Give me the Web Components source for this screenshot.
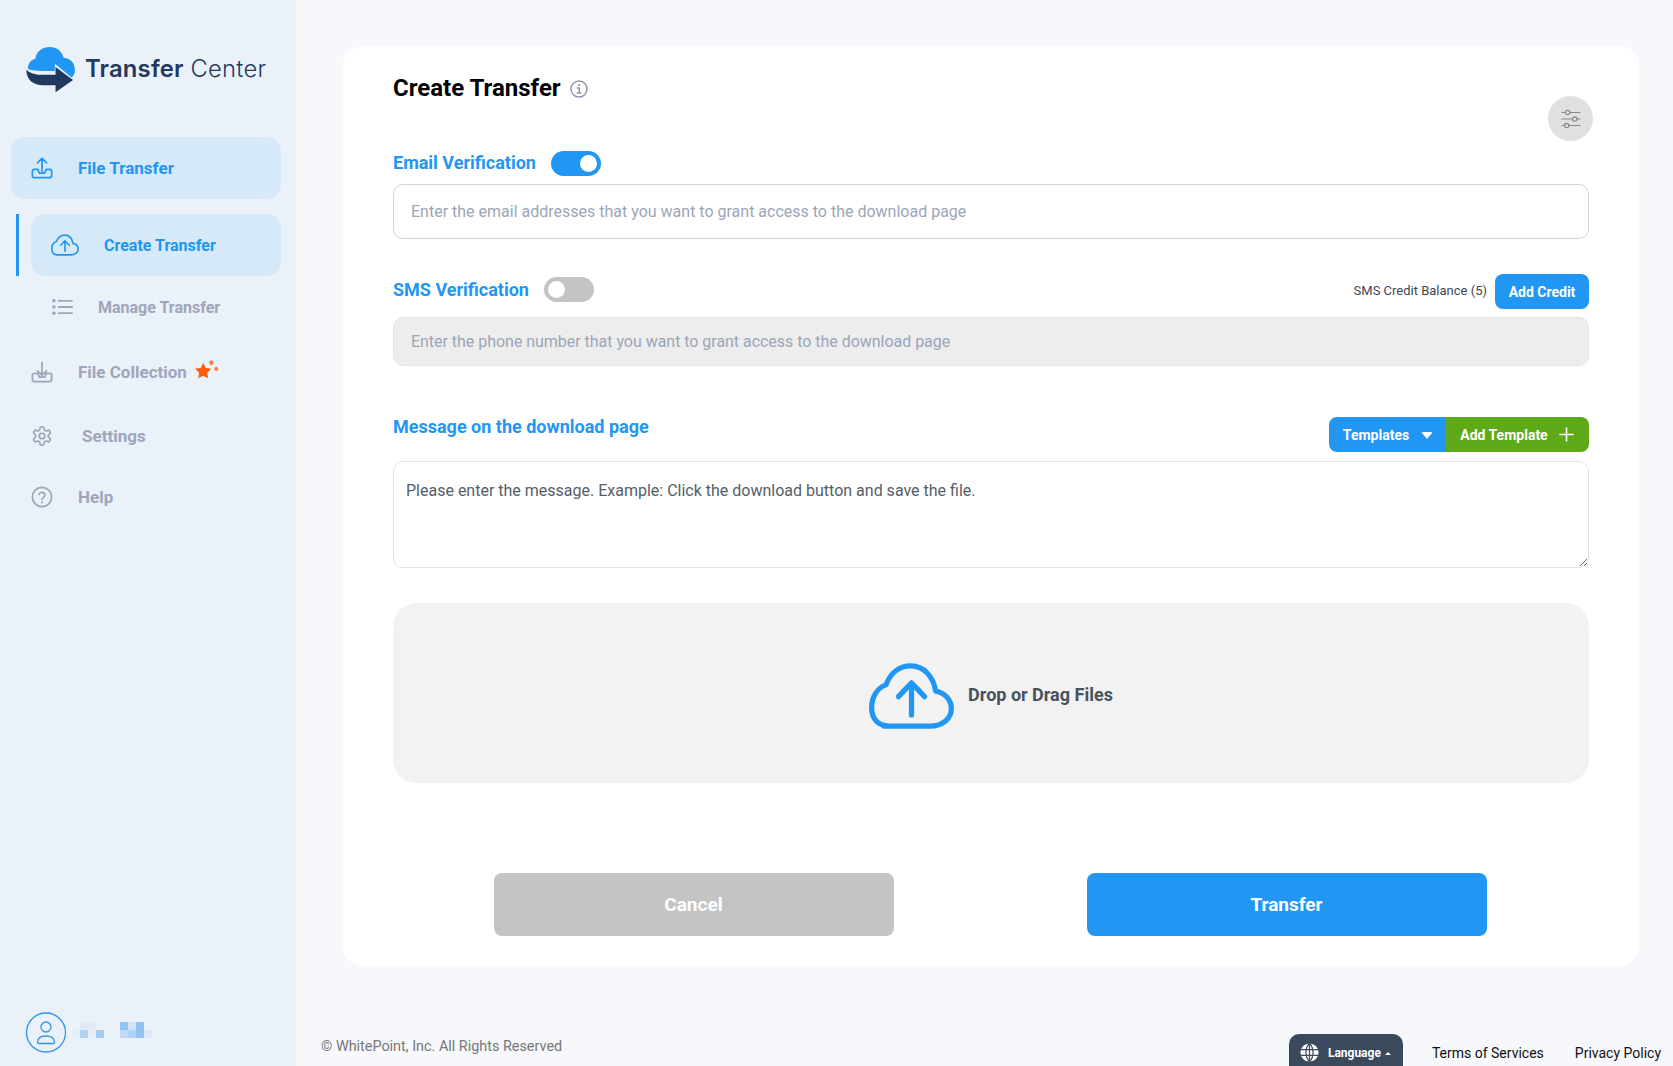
<!DOCTYPE html>
<html lang="en">
<head>
<meta charset="utf-8">
<title>Transfer Center</title>
<style>
    html, body { margin: 0; height: 100%; }
    body { display: flex; height: 1066px; overflow: hidden; background: #f6f8fc; font-family: Roboto, "Liberation Sans", sans-serif; }
</style>
</head>
<body>
<tc-sidebar></tc-sidebar>
<tc-main></tc-main>

<script>
/**
 * BaseComponent - shadow root plus styles()/template() hooks
 */
class BaseComponent extends HTMLElement {
    constructor() {
        super();
        this.attachShadow({ mode: 'open' });
    }
    styles() { return ''; }
    template() { return ''; }
    connectedCallback() {
        this.shadowRoot.innerHTML = `<style>${this.styles()}</style>${this.template()}`;
    }
}

const ICONS = {
    upload: `<svg viewBox="0 0 24 24"><path d="M12 15.500V1.500M7 6.300 12 1.500 17 6.300M7.500 13.500H3.500A2 2 0 0 0 1.500 15.500V20.500A2 2 0 0 0 3.500 22.500H20.500A2 2 0 0 0 22.500 20.500V15.500A2 2 0 0 0 20.500 13.500H16.500L15 17.500H9L7.500 13.500"/></svg>`,
    download: `<svg viewBox="0 0 24 24"><path d="M12 1.500V15.500M7 10.700 12 15.500 17 10.700M7.500 13.500H3.500A2 2 0 0 0 1.500 15.500V20.500A2 2 0 0 0 3.500 22.500H20.500A2 2 0 0 0 22.500 20.500V15.500A2 2 0 0 0 20.500 13.500H16.500L15 17.500H9L7.500 13.500"/></svg>`,
    cloud: `<svg viewBox="84 70 260 200"><path d="M130 262H270C310 262 336 238 336 208C336 182 316 160 288 155C280 108 250 78 212 78C178 78 150 98 136 136C112 144 92 170 92 205C92 238 110 262 145 262Z"/><path d="M214 228V130M174 172L214 130L254 172"/></svg>`,
    list: `<svg viewBox="0 0 22 18"><path d="M7 2.500H21M7 9H21M7 15.500H21"/><circle class="fill" cx="2" cy="2.500" r="1.800"/><circle class="fill" cx="2" cy="9" r="1.800"/><circle class="fill" cx="2" cy="15.500" r="1.800"/></svg>`,
    gear: `<svg viewBox="0 0 24 24"><path d="M12.220 2h-.44a2 2 0 0 0-2 2v.18a2 2 0 0 1-1 1.730l-.43.25a2 2 0 0 1-2 0l-.15-.08a2 2 0 0 0-2.730.73l-.22.38a2 2 0 0 0 .73 2.730l.15.1a2 2 0 0 1 1 1.720v.51a2 2 0 0 1-1 1.740l-.15.09a2 2 0 0 0-.73 2.730l.22.38a2 2 0 0 0 2.730.73l.15-.08a2 2 0 0 1 2 0l.43.25a2 2 0 0 1 1 1.730V20a2 2 0 0 0 2 2h.44a2 2 0 0 0 2-2v-.18a2 2 0 0 1 1-1.730l.43-.25a2 2 0 0 1 2 0l.15.08a2 2 0 0 0 2.730-.73l.22-.39a2 2 0 0 0-.73-2.730l-.15-.08a2 2 0 0 1-1-1.740v-.5a2 2 0 0 1 1-1.740l.15-.09a2 2 0 0 0 .73-2.730l-.22-.38a2 2 0 0 0-2.730-.73l-.15.08a2 2 0 0 1-2 0l-.43-.25a2 2 0 0 1-1-1.730V4a2 2 0 0 0-2-2z"/><circle cx="12" cy="12" r="3"/></svg>`,
    help: `<svg viewBox="0 0 24 24"><circle cx="12" cy="12" r="10.500"/><path d="M8.800 9.200a3.300 3.300 0 0 1 6.400 1c0 2.200-3.200 2.600-3.200 4.300"/><circle class="fill" cx="12" cy="18" r="1.100"/></svg>`,
    info: `<svg viewBox="0 0 18 18"><circle cx="9" cy="9" r="8"/><path d="M7.300 8H9.200V13M7.200 13H11"/><circle class="fill" cx="9" cy="5.200" r="1.100"/></svg>`,
    sliders: `<svg viewBox="0 0 20 18"><path d="M1 2.500H4.500M9 2.500H19M1 9H11.500M16 9H19M1 15.500H3.500M8 15.500H19"/><circle cx="6.700" cy="2.500" r="2.200"/><circle cx="13.700" cy="9" r="2.200"/><circle cx="5.700" cy="15.500" r="2.200"/></svg>`,
    user: `<svg viewBox="0 0 40 41"><circle cx="20" cy="20.500" r="19.500"/><circle cx="20" cy="15" r="5"/><path d="M11.500 30.500c0-4.500 3-6.500 8.500-6.500s8.500 2 8.500 6.500c0 .5-.5 1-1 1h-15c-.5 0-1-.5-1-1z"/></svg>`,
    plus: `<svg viewBox="0 0 16 16"><path d="M8 1V15M1 8H15"/></svg>`
};

// Stroke icon, sized and coloured by the host
class TcIcon extends BaseComponent {
    styles() {
        return `
            :host { display: inline-flex; flex: none; width: var(--w, 22px); height: var(--h, 22px); color: inherit; }
            svg { width: 100%; height: 100%; display: block; overflow: visible; fill: none; stroke: currentColor;
                  stroke-width: var(--sw, 1.900); stroke-linecap: round; stroke-linejoin: round; }
            .fill { fill: currentColor; stroke: none; }
        `;
    }
    template() {
        return ICONS[this.getAttribute('name')] || '';
    }
}

class TcLogo extends BaseComponent {
    styles() {
        return `
            :host { display: flex; align-items: center; gap: 9px; }
            svg { width: 50px; height: 47px; display: block; }
            span { font: 300 23.800px/1 Inter, "Open Sans", sans-serif; color: #22395f; white-space: nowrap; letter-spacing: .2px; margin-bottom: 1px; }
            b { font-weight: 600; }
        `;
    }
    template() {
        return `
            <svg viewBox="78 135 152 145">
                <path fill="#2196f3" d="M84 207C80 192 91 177 106 174C108 152 128 138 150 138C170 138 188 150 193 171C214 173 228 188 228 208C228 218 224 226 218 232L166 190V212H130C112 212 96 210 84 207Z"/>
                <path fill="#22395f" d="M78 208C90 220 108 224 130 224H168V200L222 240L168 278V256H130C100 256 78 240 78 208Z"/>
            </svg>
            <span><b>Transfer</b> Center</span>
        `;
    }
}

// One sidebar row. active: tinted pill. sub: nested row with the marker bar.
class TcNavItem extends BaseComponent {
    styles() {
        return `
            :host { display: flex; align-items: center; height: var(--row, 62px); box-sizing: border-box;
                    padding-left: var(--pad, 20px); gap: var(--gap, 25px); border-radius: 14px;
                    font-size: var(--fs, 17px); font-weight: 700; color: #a0a5b9; white-space: nowrap; }
            :host([active]) { background: #d5e9f8; color: #2196f3; }
            ::slotted([slot=icon]) { flex: none; }
        `;
    }
    template() {
        return `<slot name="icon"></slot><slot></slot>`;
    }
}

class TcAvatar extends BaseComponent {
    styles() {
        return `
            :host { display: flex; align-items: center; gap: 6px; }
            tc-icon { --w: 40px; --h: 41px; --sw: 1.300; color: #2f93f0; }
            .mosaic { display: grid; grid-template-columns: repeat(10, 8px); grid-auto-rows: 8px; margin-top: -5px; }
        `;
    }
    template() {
        // blurred-out user name
        const cells = ['', '#e1ebf7', '#e1ebf7', '', '', '', '#90c4f4', '#d4e4f7', '#8cc2f2', '',
            '#e6eef8', '#b0d0f4', '#e4edf8', '#a5cbf3', '', '', '#c0daf6', '#b0d2f5', '#90c3f2', '#dce8f6'];
        return `
            <tc-icon name="user"></tc-icon>
            <div class="mosaic">${cells.map(c => `<i style="background:${c || 'transparent'}"></i>`).join('')}</div>
        `;
    }
}

class TcSidebar extends BaseComponent {
    styles() {
        return `
            :host { display: flex; flex-direction: column; flex: none; width: 296px; height: 100%; box-sizing: border-box;
                    background: #eaf1f9; padding: 46px 15px 13px 11px; }
            tc-logo { margin-left: 15px; margin-bottom: 44px; }
            nav { display: flex; flex-direction: column; }
            .subs { display: flex; flex-direction: column; margin-top: 15px; margin-left: 5px; }
            .bar { display: flex; gap: 12px; }
            .bar::before { content: ""; width: 3px; background: #2196f3; }
            .bar tc-nav-item { flex: 1; --pad: 20px; --gap: 25px; --fs: 16px; }
            .manage { margin-left: 15px; --pad: 21px; --gap: 25px; --fs: 16px; }
            .star { margin-left: -18px; width: 26px; height: 22px; display: block; margin-top: -4px; }
            tc-avatar { margin-top: auto; margin-left: 15px; }
        `;
    }
    template() {
        return `
            <tc-logo></tc-logo>
            <nav>
                <tc-nav-item active><tc-icon slot="icon" name="upload"></tc-icon>File Transfer</tc-nav-item>
                <div class="subs">
                    <div class="bar">
                        <tc-nav-item active><tc-icon slot="icon" name="cloud" style="--w:28px;--h:22px;--sw:15"></tc-icon>Create Transfer</tc-nav-item>
                    </div>
                    <tc-nav-item class="manage"><tc-icon slot="icon" name="list" style="--w:21px;--h:18px;--sw:1.900"></tc-icon>Manage Transfer</tc-nav-item>
                </div>
                <tc-nav-item style="--row:68px"><tc-icon slot="icon" name="download"></tc-icon>File Collection
                    <svg class="star" viewBox="0 0 24 20">
                        <path fill="#ff5a0a" d="M8.500 3.500l2.300 4.700 5.200.7-3.800 3.600.9 5.200-4.600-2.500-4.600 2.500.9-5.200L1 8.900l5.200-.7z"/>
                        <path stroke="#ff7a3c" stroke-width="1" d="M16 1V5.500M13.800 3.200H18.200M14.500 1.700L17.500 4.700M17.500 1.700L14.500 4.700M20.500 7V11M18.500 9H22.500M19.200 7.700L21.800 10.300M21.800 7.700L19.200 10.300"/>
                    </svg>
                </tc-nav-item>
                <tc-nav-item style="--row:60px;--gap:29px"><tc-icon slot="icon" name="gear"></tc-icon>Settings</tc-nav-item>
                <tc-nav-item><tc-icon slot="icon" name="help"></tc-icon>Help</tc-nav-item>
            </nav>
            <tc-avatar></tc-avatar>
        `;
    }
}

class TcSwitch extends BaseComponent {
    styles() {
        return `
            :host { display: inline-flex; align-items: center; box-sizing: border-box; width: 50px; height: 25px; padding: 0 4px;
                    border-radius: 13px; background: #c4c4c4; flex: none; }
            :host([on]) { background: #2196f3; justify-content: flex-end; }
            i { width: 17px; height: 17px; border-radius: 50%; background: #fff; }
        `;
    }
    template() {
        return `<i></i>`;
    }
}

class TcField extends BaseComponent {
    styles() {
        return `
            :host { display: block; }
            input, textarea { display: block; width: 100%; height: 100%; box-sizing: border-box; margin: 0; outline: none; background: #fff;
                    font: 400 16px/1.300 Roboto, "Liberation Sans", sans-serif; color: #555e68;
                    border: 1.500px solid #d2d2d6; border-radius: 10px; padding: 0 17px; }
            input::placeholder { color: #9ba6b8; opacity: 1; }
            textarea::placeholder { color: #555e68; opacity: 1; }
            :host([disabled]) input { background: #ededed; border-color: #e3e3ef; letter-spacing: -.03px; }
            textarea { padding: 19px 12px; border-color: #e3e3ef; resize: vertical; }
        `;
    }
    template() {
        const ph = this.getAttribute('placeholder');
        if (this.hasAttribute('multiline')) {
            return `<textarea placeholder="${ph}"></textarea>`;
        }
        return `<input placeholder="${ph}" ${this.hasAttribute('disabled') ? 'disabled' : ''}>`;
    }
}

class TcButton extends BaseComponent {
    styles() {
        return `
            :host { display: inline-flex; align-items: center; justify-content: center; gap: 12px; box-sizing: border-box; height: 35px;
                    padding: 0 13px; border-radius: 8px; background: #2196f3; color: #fff; font-size: 14px; font-weight: 700; white-space: nowrap; }
            :host([variant=green]) { background: #5ea917; }
            :host([variant=muted]) { background: #c4c4c4; }
            :host([size=lg]) { width: 400px; height: 63px; font-size: 19px; color: #fff; }
        `;
    }
    template() {
        return `<slot></slot>`;
    }
}

class TcDropzone extends BaseComponent {
    styles() {
        return `
            :host { display: flex; align-items: center; justify-content: center; gap: 14px; height: 180px; border-radius: 24px;
                    background: #f2f2f2; font-size: 18px; font-weight: 700; color: #48525c; }
            tc-icon { --w: 85px; --h: 68px; --sw: 16; color: #2196f3; margin-top: 5px; }
            span { margin-top: 3px; }
        `;
    }
    template() {
        return `<tc-icon name="cloud"></tc-icon><span>Drop or Drag Files</span>`;
    }
}

class TcTransferForm extends BaseComponent {
    styles() {
        return `
            :host { display: block; height: 920px; box-sizing: border-box; padding: 24px 50px 0; background: #fff; border-radius: 20px; flex: none; }
            .head { display: flex; justify-content: space-between; height: 81px; }
            h1 { display: flex; align-items: center; gap: 9px; height: 36px; margin: 0; font-size: 24px; font-weight: 700; color: #000; }
            h1 tc-icon { --w: 18px; --h: 18px; --sw: 1.400; color: #8d92ad; margin-top: 2px; }
            .tune { display: flex; align-items: center; justify-content: center; width: 45px; height: 45px; margin: 26px -4px 0 0; border-radius: 50%; background: #e0e0e0; }
            .tune tc-icon { --w: 20px; --h: 18px; --sw: 1.200; color: #888; }
            .row { display: flex; align-items: center; justify-content: space-between; }
            .left { display: flex; align-items: center; gap: 15px; }
            label { font-size: 18px; font-weight: 700; color: #2196f3; white-space: nowrap; }
            .email label { margin-bottom: 2px; }
            .email { height: 25px; margin-bottom: 8px; }
            .sms { height: 35px; margin: 35px 0 8px; }
            .sms .left { margin-bottom: 5px; }
            .balance { display: flex; align-items: center; gap: 8px; font-size: 13px; color: #3f4852; }
            .balance span { margin-bottom: 2px; }
            .balance tc-button { width: 94px; }
            .msg { height: 35px; margin: 51px 0 9px; align-items: flex-start; }
            .msg label { line-height: 20px; }
            .split { display: flex; }
            .split tc-button:first-child { border-radius: 8px 0 0 8px; width: 117px; gap: 12px; padding-left: 14px; }
            .split tc-button:last-child { border-radius: 0 8px 8px 0; width: 143px; gap: 11px; padding-right: 14px; }
            .caret { width: 0; height: 0; border: 6px solid transparent; border-top: 7px solid #fff; border-bottom: 0; border-radius: 2px; margin-top: 2px; }
            .split tc-icon { --w: 15px; --h: 15px; --sw: 1.700; }
            .email-input { height: 55px; }
            .sms-input { height: 49px; }
            .msg-input { height: 107px; }
            tc-dropzone { margin-top: 35px; }
            .actions { display: flex; justify-content: center; gap: 193px; margin: 90px 0 0 -2px; }
        `;
    }
    template() {
        return `
            <div class="head">
                <h1>Create Transfer <tc-icon name="info"></tc-icon></h1>
                <div class="tune"><tc-icon name="sliders"></tc-icon></div>
            </div>

            <div class="row email">
                <div class="left"><label>Email Verification</label><tc-switch on></tc-switch></div>
            </div>
            <tc-field class="email-input" placeholder="Enter the email addresses that you want to grant access to the download page"></tc-field>

            <div class="row sms">
                <div class="left"><label>SMS Verification</label><tc-switch></tc-switch></div>
                <div class="balance"><span>SMS Credit Balance (5)</span><tc-button>Add Credit</tc-button></div>
            </div>
            <tc-field class="sms-input" disabled placeholder="Enter the phone number that you want to grant access to the download page"></tc-field>

            <div class="row msg">
                <label>Message on the download page</label>
                <div class="split">
                    <tc-button>Templates <i class="caret"></i></tc-button>
                    <tc-button variant="green">Add Template <tc-icon name="plus"></tc-icon></tc-button>
                </div>
            </div>
            <tc-field class="msg-input" multiline placeholder="Please enter the message. Example: Click the download button and save the file."></tc-field>

            <tc-dropzone></tc-dropzone>

            <div class="actions">
                <tc-button size="lg" variant="muted">Cancel</tc-button>
                <tc-button size="lg">Transfer</tc-button>
            </div>
        `;
    }
}

class TcFooter extends BaseComponent {
    styles() {
        return `
            :host { display: flex; align-items: flex-start; margin: 68px -22px 0; color: #111; font-size: 14px; }
            .copy { margin: 4px auto 0 0; color: #777; font-size: 14.400px; }
            .lang { display: flex; align-items: center; gap: 9px; box-sizing: border-box; width: 114px; height: 44px; padding: 0 0 7px 11px;
                    margin-right: 29px; border-radius: 10px 10px 0 0; background: #3a4a5c; color: #fff; font-size: 12px; font-weight: 700; }
            .lang svg { width: 19px; height: 19px; flex: none; }
            .lang i { display: inline-block; width: 0; height: 0; border: 3px solid transparent; border-bottom: 3px solid #fff; border-top: 0; margin-left: 4px; vertical-align: 2px; }
            .link { margin-top: 11px; white-space: nowrap; }
            .link + .link { margin-left: 31px; }
        `;
    }
    template() {
        return `
            <span class="copy">© WhitePoint, Inc. All Rights Reserved</span>
            <div class="lang">
                <svg viewBox="0 0 20 20"><circle cx="10" cy="10" r="9.500" fill="#fff"/><path fill="none" stroke="#3a4a5c" stroke-width="1.300" d="M0 7H20M0 13H20M10 0V20M10 .5C5 5 5 15 10 19.500M10 .5C15 5 15 15 10 19.500"/></svg>
                <span>Language<i></i></span>
            </div>
            <span class="link">Terms of Services</span>
            <span class="link">Privacy Policy</span>
        `;
    }
}

class TcMain extends BaseComponent {
    styles() {
        return `
            :host { display: flex; flex-direction: column; flex: 1; min-width: 0; padding: 46px 34px 0 47px; box-sizing: border-box; }
        `;
    }
    template() {
        return `<tc-transfer-form></tc-transfer-form><tc-footer></tc-footer>`;
    }
}

const components = {
    'tc-icon': TcIcon, 'tc-logo': TcLogo, 'tc-nav-item': TcNavItem, 'tc-avatar': TcAvatar, 'tc-sidebar': TcSidebar,
    'tc-switch': TcSwitch, 'tc-field': TcField, 'tc-button': TcButton, 'tc-dropzone': TcDropzone,
    'tc-transfer-form': TcTransferForm, 'tc-footer': TcFooter, 'tc-main': TcMain
};
Object.keys(components).forEach(name => customElements.define(name, components[name]));
</script>
</body>
</html>
